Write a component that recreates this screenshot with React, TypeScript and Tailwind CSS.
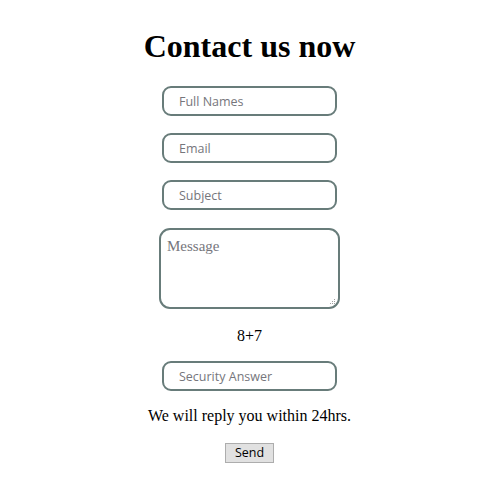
export default function App() {
  const field =
    "block w-[175px] h-[30px] rounded-[9px] border-2 border-[#687c7a] bg-white px-[15px] text-[12.5px] text-black outline-none placeholder:text-[#76767c] font-['Open_Sans',sans-serif]";

  return (
    <div className="min-h-[477px] bg-white pl-[18px] flex flex-col items-center font-['Liberation_Serif',serif] text-black">
      <h1 className="pt-[28px] text-[32px] leading-[37px] font-bold">Contact us now</h1>
      <form className="flex flex-col items-center mt-[21px]" onSubmit={(e) => e.preventDefault()}>
        <input type="text" placeholder="Full Names" className={field} />
        <input type="email" placeholder="Email" className={`${field} mt-[17px]`} />
        <input type="text" placeholder="Subject" className={`${field} mt-[17px]`} />
        <div className="relative mt-[18px]">
          <textarea
            placeholder="Message"
            className="block w-[181px] h-[81px] resize-none rounded-[11px] border-2 border-[#687c7a] bg-white px-[6px] pt-[8px] pb-[6px] text-[15px] leading-[17px] outline-none placeholder:text-[#76767c] font-['Liberation_Serif',serif]"
          />
          {/* resize grip */}
          <svg className="absolute right-[4px] bottom-[4px]" width="7" height="7" viewBox="0 0 7 7">
            <rect x="5" y="1" width="1" height="1" fill="#a0a0a0" />
            <rect x="3" y="3" width="1" height="1" fill="#a0a0a0" />
            <rect x="5" y="3" width="1" height="1" fill="#a0a0a0" />
            <rect x="1" y="5" width="1" height="1" fill="#a0a0a0" />
            <rect x="3" y="5" width="1" height="1" fill="#a0a0a0" />
            <rect x="5" y="5" width="1" height="1" fill="#a0a0a0" />
          </svg>
        </div>
        <p className="mt-[18px] text-[16px] leading-[18px]">8+7</p>
        <input type="text" placeholder="Security Answer" className={`${field} mt-[16px]`} />
        <p className="mt-[16px] text-[16px] leading-[18px]">We will reply you within 24hrs.</p>
        <button
          type="submit"
          className="mt-[18px] w-[49px] h-[20px] border border-[#adadad] bg-[#e1e1e1] text-[12.5px] leading-none text-black font-['Open_Sans',sans-serif]"
        >
          Send
        </button>
      </form>
    </div>
  );
}
